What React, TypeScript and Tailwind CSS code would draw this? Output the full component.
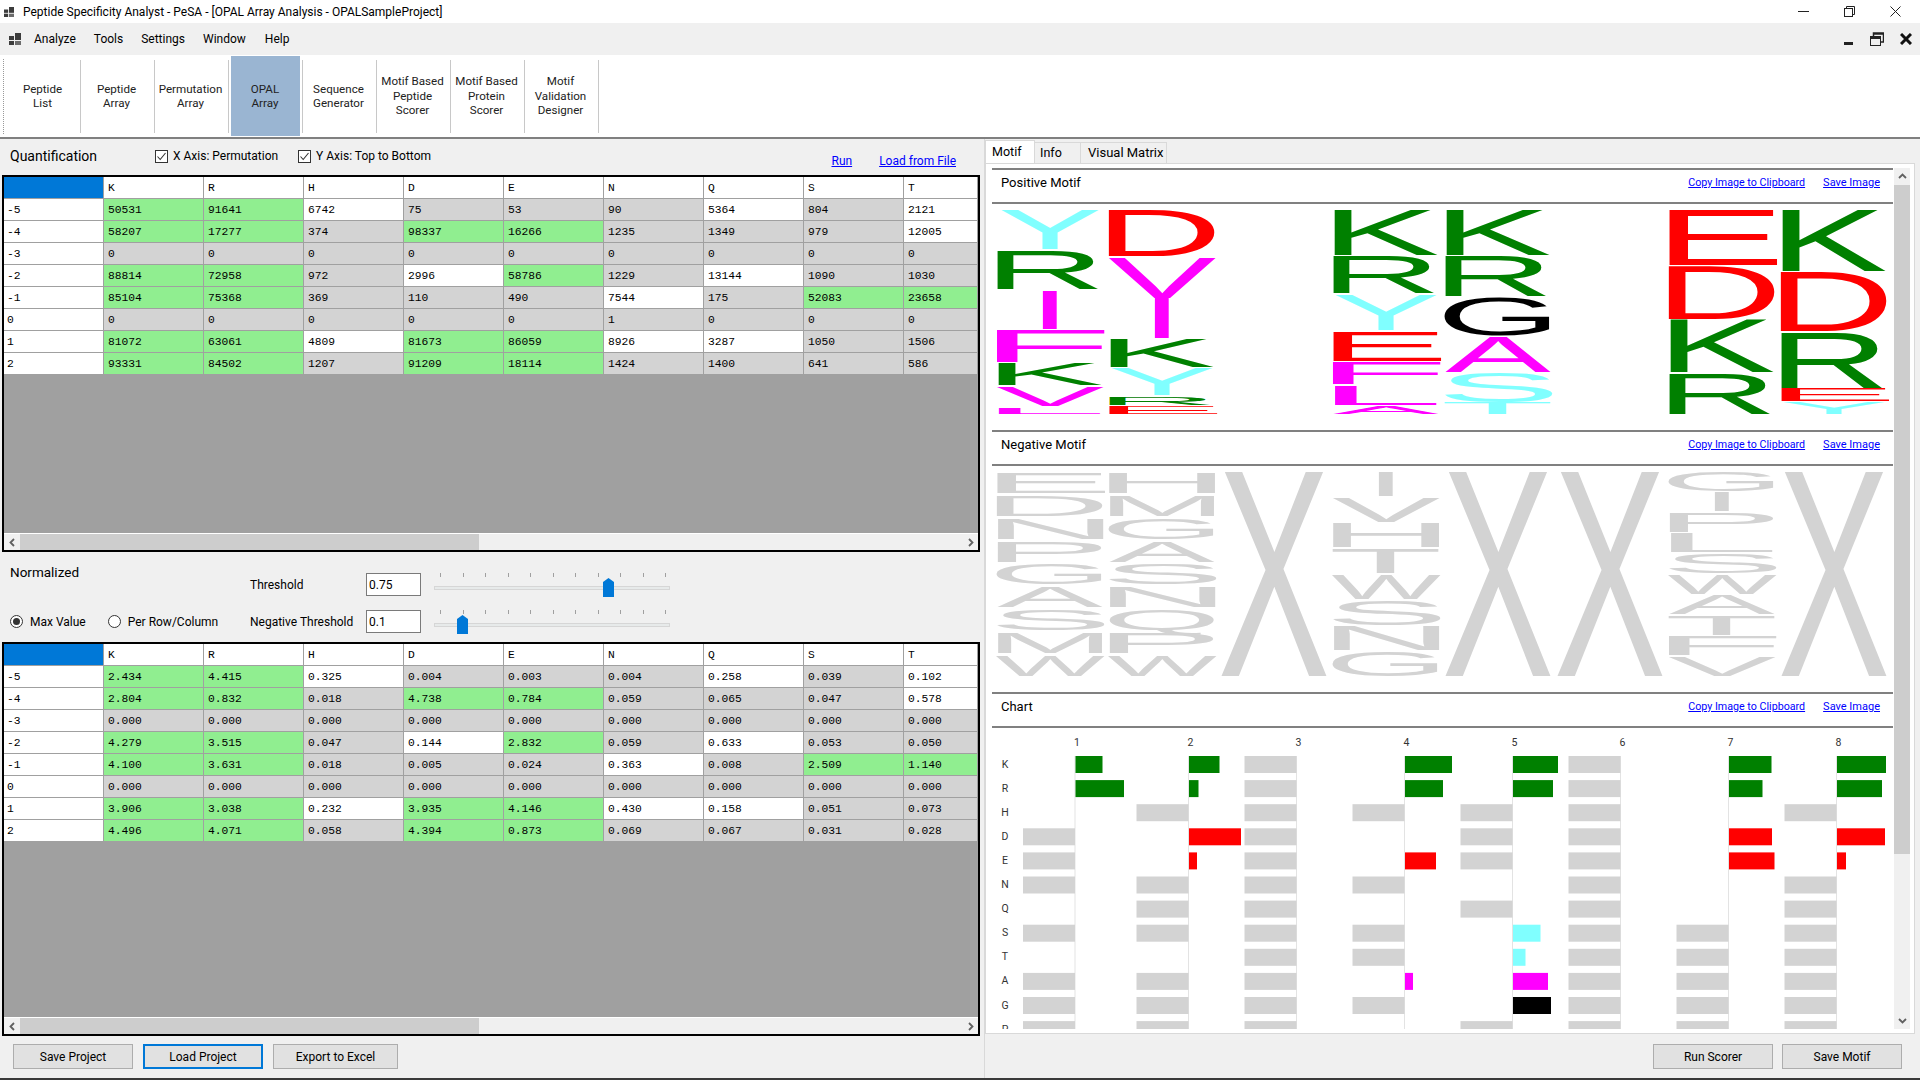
import React from "react";

const UI = "[font-family:Roboto,sans-serif]";

// cell colours are the same in both tables
const shades = [
  "ggwcccwcw",
  "ggcggcccw",
  "ccccccccc",
  "ggcwgcwcc",
  "ggcccwcgg",
  "ccccccccc",
  "ggwggwwcc",
  "ggcggcccc",
];
const cellBg: Record<string, string> = {
  g: "bg-[#90ee90]",
  w: "bg-white",
  c: "bg-[#d3d3d3]",
};
const rowNames = ["-5", "-4", "-3", "-2", "-1", "0", "1", "2"];
const colNames = ["K", "R", "H", "D", "E", "N", "Q", "S", "T"];

const quantData = [
  ["50531", "91641", "6742", "75", "53", "90", "5364", "804", "2121"],
  ["58207", "17277", "374", "98337", "16266", "1235", "1349", "979", "12005"],
  ["0", "0", "0", "0", "0", "0", "0", "0", "0"],
  ["88814", "72958", "972", "2996", "58786", "1229", "13144", "1090", "1030"],
  ["85104", "75368", "369", "110", "490", "7544", "175", "52083", "23658"],
  ["0", "0", "0", "0", "0", "1", "0", "0", "0"],
  ["81072", "63061", "4809", "81673", "86059", "8926", "3287", "1050", "1506"],
  ["93331", "84502", "1207", "91209", "18114", "1424", "1400", "641", "586"],
];
const zeros = ["0.000", "0.000", "0.000", "0.000", "0.000", "0.000", "0.000", "0.000", "0.000"];
const normData = [
  ["2.434", "4.415", "0.325", "0.004", "0.003", "0.004", "0.258", "0.039", "0.102"],
  ["2.804", "0.832", "0.018", "4.738", "0.784", "0.059", "0.065", "0.047", "0.578"],
  zeros,
  ["4.279", "3.515", "0.047", "0.144", "2.832", "0.059", "0.633", "0.053", "0.050"],
  ["4.100", "3.631", "0.018", "0.005", "0.024", "0.363", "0.008", "2.509", "1.140"],
  zeros,
  ["3.906", "3.038", "0.232", "3.935", "4.146", "0.430", "0.158", "0.051", "0.073"],
  ["4.496", "4.071", "0.058", "4.394", "0.873", "0.069", "0.067", "0.031", "0.028"],
];

const toolbarItems = [
  ["Peptide", "List"],
  ["Peptide", "Array"],
  ["Permutation", "Array"],
  ["OPAL", "Array"],
  ["Sequence", "Generator"],
  ["Motif Based", "Peptide", "Scorer"],
  ["Motif Based", "Protein", "Scorer"],
  ["Motif", "Validation", "Designer"],
];

const letterColor: Record<string, string> = {
  K: "#008000",
  R: "#008000",
  D: "#ff0000",
  E: "#ff0000",
  S: "#80ffff",
  T: "#80ffff",
  Y: "#80ffff",
  G: "#000000",
  A: "#ff00ff",
  F: "#ff00ff",
  I: "#ff00ff",
  L: "#ff00ff",
  V: "#ff00ff",
};

// left and right ink edge of each capital, in 1/2048 em
const ink: Record<string, [number, number]> = {
  A: [-3, 1369],
  D: [170, 1390],
  E: [162, 1256],
  F: [168, 1157],
  G: [109, 1465],
  H: [164, 1311],
  I: [191, 385],
  K: [150, 1362],
  L: [150, 1096],
  M: [152, 1551],
  N: [156, 1311],
  P: [158, 1277],
  Q: [86, 1511],
  R: [161, 1446],
  S: [92, 1259],
  T: [48, 1210],
  V: [9, 1350],
  W: [26, 1900],
  X: [40, 1330],
  Y: [9, 1353],
};

type Stack = [string, number, number][];

const positiveMotif: Record<number, Stack> = {
  0: [["Y", 0, 39], ["R", 40.7, 79], ["I", 81, 119], ["F", 120.7, 152], ["K", 154, 175], ["V", 176.7, 196], ["L", 197.7, 204]],
  1: [["D", 0, 46], ["V", 47.7, 87.7], ["I", 89, 128], ["K", 129, 157], ["Y", 158, 185], ["R", 187, 195], ["E", 196, 204]],
  3: [["K", 0, 45], ["R", 46.7, 83], ["Y", 85, 120], ["E", 121.7, 151], ["F", 152.7, 174], ["L", 176, 195], ["A", 196, 204]],
  4: [["K", 0, 45], ["R", 46.7, 86], ["G", 87.7, 125], ["A", 126.7, 161.7], ["S", 163, 191.7], ["T", 192.7, 204]],
  6: [["E", 0, 55], ["D", 56.7, 109], ["K", 110.3, 162.3], ["R", 164, 204]],
  7: [["K", 0, 61], ["D", 62.3, 121], ["R", 123, 178], ["E", 179, 191], ["Y", 192.7, 204]],
};

const negativeMotif = ["EDNPGASMW", "HMGASNQPW", "X", "IVHTWSNG", "X", "X", "GIPLSWATFV", "X"];

function evenStack(letters: string): Stack {
  const gap = letters.length > 1 ? 2 : 0;
  const h = (204 + gap) / letters.length - gap;
  return letters.split("").map((ch, i) => [ch, i * (h + gap), i * (h + gap) + h]);
}

function MotifLetter({ ch, col, top, bottom, color }: { ch: string; col: number; top: number; bottom: number; color: string }) {
  const [a, b] = ink[ch];
  const colX = 5 + col * 112;
  const w = ch === "I" ? 14 : 106;
  const x = ch === "I" ? colX + 46 : colX;
  const sx = w / (((b - a) / 2048) * 100);
  const sy = (bottom - top) / 68.8;
  return (
    <text
      fontSize={100}
      fill={color}
      transform={`translate(${x - (a / 2048) * 100 * sx} ${bottom}) scale(${sx} ${sy})`}
    >
      {ch}
    </text>
  );
}

function PositiveLogo() {
  return (
    <svg width={901} height={204} className="block [font-family:'Liberation_Sans',sans-serif]">
      {Object.entries(positiveMotif).map(([col, stack]) =>
        stack.map(([ch, top, bottom]) => (
          <MotifLetter key={col + ch + top} ch={ch} col={Number(col)} top={top} bottom={bottom} color={letterColor[ch]} />
        ))
      )}
    </svg>
  );
}

function NegativeLogo() {
  return (
    <svg width={901} height={204} className="block [font-family:'Liberation_Sans',sans-serif]">
      {negativeMotif.map((letters, col) =>
        evenStack(letters).map(([ch, top, bottom]) => (
          <MotifLetter key={col + ch + top} ch={ch} col={col} top={top} bottom={bottom} color="#d3d3d3" />
        ))
      )}
    </svg>
  );
}

const chartRows = ["K", "R", "H", "D", "E", "N", "Q", "S", "T", "A", "G", "P"];
// -1 is a grey bar left of the axis, 0 nothing, anything else a coloured bar of that width
const chartCols = [
  { axis: 83, bars: [27, 48.5, 0, -1, -1, -1, 0, -1, 0, -1, -1, -1] },
  { axis: 196.5, bars: [30.5, 9.5, -1, 52, 8, -1, -1, -1, 0, -1, -1, -1] },
  { axis: 304.5, bars: [-1, -1, -1, -1, -1, -1, -1, -1, -1, -1, -1, -1] },
  { axis: 412.5, bars: [47, 38, -1, 0, 31, -1, 0, -1, -1, 8, -1, 0] },
  { axis: 520.5, bars: [45, 40, -1, -1, -1, 0, -1, 27.5, 12.5, 35, 38, -1] },
  { axis: 628.5, bars: [-1, -1, -1, -1, -1, -1, -1, -1, -1, -1, -1, -1] },
  { axis: 736.5, bars: [42.5, 33.5, 0, 43, 45.5, 0, 0, -1, -1, -1, -1, -1] },
  { axis: 844.5, bars: [49, 45, -1, 48, 9, -1, -1, -1, -1, -1, -1, -1] },
];

function ChartGraphic() {
  return (
    <svg width={901} height={301} className="block overflow-hidden [font-family:Roboto,sans-serif]">
      {chartCols.map((c, i) => (
        <g key={i}>
          <text x={c.axis + 2} y={18} fontSize={10.5} fill="#333333" textAnchor="middle">
            {i + 1}
          </text>
          <line x1={c.axis} x2={c.axis} y1={28} y2={301} stroke="#e3e3e3" />
          {c.bars.map((b, r) => {
            if (b === 0) return null;
            const y = 28 + r * 24.1;
            if (b < 0) return <rect key={r} x={c.axis - 52} y={y} width={52} height={17} fill="#d3d3d3" />;
            return <rect key={r} x={c.axis + 0.5} y={y} width={b} height={17} fill={letterColor[chartRows[r]]} />;
          })}
        </g>
      ))}
      {chartRows.map((l, r) => (
        <text key={l} x={13} y={39.5 + r * 24.1} fontSize={10.5} fill="#333333" textAnchor="middle">
          {l}
        </text>
      ))}
    </svg>
  );
}

function AppIcon({ size }: { size: number }) {
  return (
    <svg width={size} height={size} viewBox="0 0 12 12" fill="#3c3c3c">
      <rect x="0" y="3" width="5" height="4" />
      <rect x="6" y="0" width="6" height="7" />
      <rect x="0" y="8" width="5" height="4" />
      <rect x="6" y="8" width="6" height="4" fill="#6c6c6c" />
    </svg>
  );
}

function Chevron({ dir }: { dir: "left" | "right" | "up" | "down" }) {
  const d = {
    left: "M6 1 L2.5 4.5 L6 8",
    right: "M3 1 L6.5 4.5 L3 8",
    up: "M1 6 L4.5 2.5 L8 6",
    down: "M1 3 L4.5 6.5 L8 3",
  }[dir];
  return (
    <svg width={9} height={9} viewBox="0 0 9 9" fill="none" stroke="#606060" strokeWidth={1.8}>
      <path d={d} />
    </svg>
  );
}

function DataTable({ data }: { data: string[][] }) {
  return (
    <div className="flex min-h-0 flex-1 flex-col border-2 border-black bg-[#a0a0a0]">
      <div className="flex-1 overflow-hidden">
        <div className="grid grid-cols-[repeat(9,100px)_1fr] auto-rows-[22px] [font-family:'Liberation_Mono',monospace] text-[11.3px] text-black">
          <div className="border-b border-r border-[#a0a0a0] bg-[#0078d7]" />
          {colNames.map((c) => (
            <div key={c} className="flex items-center border-b border-r border-[#a0a0a0] bg-white pl-1 pt-[2px]">
              {c}
            </div>
          ))}
          {data.map((row, r) => (
            <React.Fragment key={r}>
              <div className="flex items-center border-b border-r border-[#a0a0a0] bg-white pl-[3px] pt-[2px]">
                {rowNames[r]}
              </div>
              {row.map((v, c) => (
                <div key={c} className={`flex items-center border-b border-r border-[#a0a0a0] pl-1 pt-[2px] ${cellBg[shades[r][c]]}`}>
                  {v}
                </div>
              ))}
            </React.Fragment>
          ))}
        </div>
      </div>
      <div className="flex h-[17px] items-center border-t border-white bg-[#f0f0f0]">
        <div className="flex w-4 justify-center">
          <Chevron dir="left" />
        </div>
        <div className="h-full w-[459px] bg-[#cdcdcd]" />
        <div className="flex-1" />
        <div className="flex w-4 justify-center">
          <Chevron dir="right" />
        </div>
      </div>
    </div>
  );
}

function Checkbox({ label }: { label: string }) {
  return (
    <div className="flex items-center gap-[5px]">
      <svg width={13} height={13} viewBox="0 0 13 13" fill="none">
        <rect x="0.5" y="0.5" width="12" height="12" fill="#fff" stroke="#333" />
        <path d="M2.5 6.5 L5.2 9.5 L10.5 3" stroke="#333" strokeWidth={1.1} />
      </svg>
      <span className="whitespace-nowrap text-[12px]">{label}</span>
    </div>
  );
}

function Radio({ label, checked }: { label: string; checked?: boolean }) {
  return (
    <div className="flex items-center gap-[7px]">
      <svg width={13} height={13} viewBox="0 0 13 13" fill="#fff">
        <circle cx="6.5" cy="6.5" r="6" stroke="#333" />
        {checked && <circle cx="6.5" cy="6.5" r="3.5" fill="#333" />}
      </svg>
      <span className="whitespace-nowrap text-[12px]">{label}</span>
    </div>
  );
}

function SliderBar({ left }: { left: number }) {
  return (
    <div className="relative ml-[13px] h-[24px] w-[236px]">
      <div className="ml-[6px] flex w-[226px] justify-between">
        {Array.from({ length: 11 }).map((_, i) => (
          <div key={i} className="h-1 w-px bg-[#a0a0a0]" />
        ))}
      </div>
      <div className="mt-[9px] h-1 border border-[#d6d6d6] bg-[#e7eaea]" />
      <svg width={11} height={19} viewBox="0 0 11 19" fill="#0078d7" className="absolute top-[5px]" style={{ left }}>
        <path d="M0 4 L5.5 0 L11 4 V19 H0 Z" />
      </svg>
    </div>
  );
}

function NumberBox({ value }: { value: string }) {
  return (
    <div className="flex h-[23px] w-[55px] items-center border border-[#7a7a7a] bg-white pl-[2px] text-[12px]">
      {value}
    </div>
  );
}

function LinkText({ children, size = "text-[12px]" }: { children: string; size?: string }) {
  return <span className={`whitespace-nowrap text-[#0000ff] underline ${size}`}>{children}</span>;
}

function Button({ label, width, focused }: { label: string; width: string; focused?: boolean }) {
  return (
    <div
      className={`flex h-[25px] items-center justify-center bg-[#e1e1e1] text-[12px] ${width} ${
        focused ? "border-2 border-[#0078d7]" : "border border-[#adadad]"
      }`}
    >
      {label}
    </div>
  );
}

function MotifSection({ title, height, children }: { title: string; height: string; children: React.ReactNode }) {
  return (
    <section className={`border-t-2 border-[#808080] ${height}`}>
      <div className="flex h-[34px] items-center justify-between border-b-2 border-[#808080] pb-[6px] pl-[9px] pr-[13px]">
        <span className="text-[13px]">{title}</span>
        <div className="flex gap-[18px]">
          <LinkText size="text-[10.7px]">Copy Image to Clipboard</LinkText>
          <LinkText size="text-[11px]">Save Image</LinkText>
        </div>
      </div>
      {children}
    </section>
  );
}

export default function App() {
  return (
    <div className={`flex h-[1080px] w-[1920px] flex-col overflow-hidden bg-[#f0f0f0] text-black ${UI}`}>
      {/* title bar */}
      <header className="flex h-[23px] items-center justify-between bg-white">
        <div className="flex items-center gap-[9px] pl-1 text-[12px]">
          <AppIcon size={10} />
          <span>Peptide Specificity Analyst - PeSA - [OPAL Array Analysis - OPALSampleProject]</span>
        </div>
        <div className="flex items-center gap-[35px] pr-[19px]">
          <svg width={11} height={11} viewBox="0 0 11 11" stroke="#222">
            <path d="M0 5.5 H11" />
          </svg>
          <svg width={11} height={11} viewBox="0 0 11 11" stroke="#222" fill="none">
            <rect x="0.5" y="2.5" width="8" height="8" />
            <path d="M2.5 2.5 V0.5 H10.5 V8.5 H8.5" />
          </svg>
          <svg width={11} height={11} viewBox="0 0 11 11" stroke="#222">
            <path d="M0.5 0.5 L10.5 10.5 M10.5 0.5 L0.5 10.5" />
          </svg>
        </div>
      </header>

      {/* menu bar */}
      <nav className="flex h-[32px] items-center justify-between">
        <div className="flex items-center pl-[9px] text-[12px]">
          <AppIcon size={12} />
          <span className="ml-[13px]">Analyze</span>
          <span className="ml-[18px]">Tools</span>
          <span className="ml-[18px]">Settings</span>
          <span className="ml-[18px]">Window</span>
          <span className="ml-[19px]">Help</span>
        </div>
        <div className="flex items-center gap-[16px] pr-[8px]">
          <svg width={11} height={11} viewBox="0 0 11 11" fill="#222">
            <rect x="1" y="8" width="9" height="3" />
          </svg>
          <svg width={14} height={14} viewBox="0 0 14 14" fill="none" stroke="#222">
            <rect x="0.5" y="4.5" width="10" height="9" />
            <path d="M0.5 6 H10.5" strokeWidth={2} />
            <path d="M3.5 4 V1 H13.5 V10 H10.5 M3.5 2 H13.5" strokeWidth={1.5} />
          </svg>
          <svg width={12} height={12} viewBox="0 0 12 12" stroke="#111" strokeWidth={3}>
            <path d="M1 1 L11 11 M11 1 L1 11" />
          </svg>
        </div>
      </nav>

      {/* toolbar */}
      <div className="flex h-[82px] items-center bg-white text-center text-[11.6px] leading-[14.5px] text-[#222]">
        <div className="ml-[3px] mr-[3px] h-[75px] border-l border-dotted border-[#999]" />
        {toolbarItems.map((lines, i) => (
          <React.Fragment key={i}>
            <div
              className={
                i === 3
                  ? "mx-[2px] flex h-[80px] w-[69px] flex-col justify-center bg-[#9ab5d2] pr-px"
                  : "flex h-[80px] w-[73px] flex-col justify-center pr-[2px]"
              }
            >
              {lines.map((l) => (
                <span key={l} className="whitespace-nowrap">
                  {l}
                </span>
              ))}
            </div>
            <div className="h-[73px] w-px bg-[#c8c8c8]" />
          </React.Fragment>
        ))}
      </div>

      {/* main */}
      <main className="flex min-h-0 flex-1 border-t-2 border-[#808080]">
        <div className="flex w-[985px] flex-col border-r border-[#d9d9d9]">
          <div className="flex h-[36px] items-center pb-[2px] pl-[10px]">
            <span className="w-[145px] text-[14px]">Quantification</span>
            <Checkbox label="X Axis: Permutation" />
            <div className="ml-[20px]">
              <Checkbox label="Y Axis: Top to Bottom" />
            </div>
            <div className="ml-auto mr-[28px] mt-[10px] flex gap-[27px]">
              <LinkText>Run</LinkText>
              <LinkText>Load from File</LinkText>
            </div>
          </div>

          <div className="ml-[2px] flex h-[377px] w-[978px]">
            <DataTable data={quantData} />
          </div>

          <div className="grid h-[90px] grid-cols-[240px_116px_1fr] grid-rows-[23px_23px] items-center gap-y-[14px] pl-[10px] pt-[21px] text-[12px]">
            <span className="pb-[25px] text-[13.5px]">Normalized</span>
            <span>Threshold</span>
            <div className="flex items-center">
              <NumberBox value="0.75" />
              <SliderBar left={169} />
            </div>
            <div className="flex gap-[22px]">
              <Radio label="Max Value" checked />
              <Radio label="Per Row/Column" />
            </div>
            <span>Negative Threshold</span>
            <div className="flex items-center">
              <NumberBox value="0.1" />
              <SliderBar left={23} />
            </div>
          </div>

          <div className="ml-[2px] flex h-[394px] w-[978px]">
            <DataTable data={normData} />
          </div>

          <div className="flex flex-1 items-start gap-[10px] pl-[13px] pt-2">
            <Button label="Save Project" width="w-[120px]" />
            <Button label="Load Project" width="w-[120px]" focused />
            <Button label="Export to Excel" width="w-[125px]" />
          </div>
        </div>

        <div className="flex flex-1 flex-col">
          {/* tabs */}
          <div className="flex h-[24px] items-end text-[12.5px]">
            <div className="flex h-[23px] w-[50px] items-start border-x border-t border-[#d9d9d9] bg-white pl-[6px] pt-[2px]">
              Motif
            </div>
            <div className="flex h-[21px] w-[46px] items-center border-r border-t border-[#d9d9d9] pl-[5px]">Info</div>
            <div className="flex h-[21px] w-[86px] items-center border-r border-t border-[#d9d9d9] pl-[7px] text-[13px]">
              Visual Matrix
            </div>
          </div>

          <div className="flex h-[871px] w-[930px] border border-[#d9d9d9] bg-white pl-[6px] pt-1">
            <div className="w-[901px] overflow-hidden">
              <MotifSection title="Positive Motif" height="h-[262px]">
                <div className="pt-[6px]">
                  <PositiveLogo />
                </div>
              </MotifSection>
              <MotifSection title="Negative Motif" height="h-[262px]">
                <div className="pt-[6px]">
                  <NegativeLogo />
                </div>
              </MotifSection>
              <MotifSection title="Chart" height="h-[336px]">
                <ChartGraphic />
              </MotifSection>
            </div>
            <div className="ml-px flex h-[861px] w-4 flex-col bg-[#f0f0f0]">
              <div className="flex h-[17px] items-center justify-center">
                <Chevron dir="up" />
              </div>
              <div className="h-[669px] bg-[#cdcdcd]" />
              <div className="flex-1" />
              <div className="flex h-[17px] items-center justify-center">
                <Chevron dir="down" />
              </div>
            </div>
          </div>

          <div className="flex flex-1 items-start justify-end gap-[9px] pr-[18px] pt-[10px]">
            <Button label="Run Scorer" width="w-[120px]" />
            <Button label="Save Motif" width="w-[120px]" />
          </div>
        </div>
      </main>
      <div className="h-[2px] bg-[#3a3a3a]" />
    </div>
  );
}
